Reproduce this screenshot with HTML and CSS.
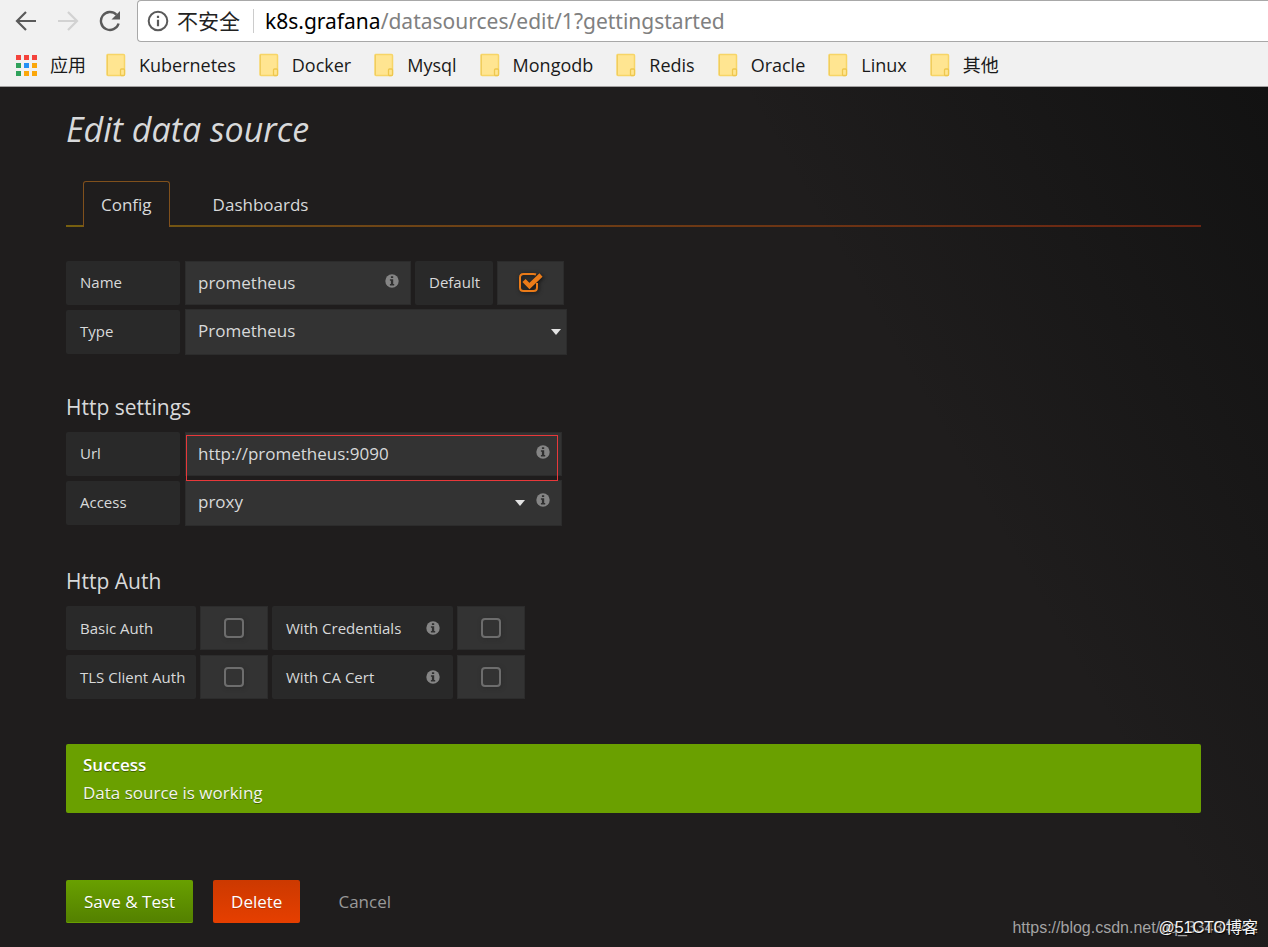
FILE: index.html
```html
<!DOCTYPE html>
<html lang="en">
<head>
<meta charset="utf-8">
<title>Edit data source</title>
<link rel="stylesheet" href="styles.css">
</head>
<body>
<svg class="sprite" aria-hidden="true">
  <symbol id="folder" viewBox="0 0 20 24">
    <path d="M1.500 1.500h16q1 0 1 1v19q0 1-1 1h-15.500q-1 0-1-1v-19q0-1 .5-1z" fill="#ffe591" stroke="#f7d567" stroke-width="1.500"/>
    <path d="M1.500 2v20" stroke="#f0cd5e" stroke-width="1"/>
    <rect x="14.500" y="16" width="4" height="6.500" rx="1" fill="#ffe591" stroke="#eec74e" stroke-width="1.300"/>
  </symbol>
  <symbol id="info" viewBox="0 0 14 14">
    <circle cx="7" cy="7" r="6.700" fill="#858585"/>
    <path d="M5.900 2.200h2.300v1.900H5.900zM4.900 5.200h3.300v4.700h1v1.500H4.900V9.900h1V6.700h-1z" fill="#303030"/>
  </symbol>
  <symbol id="caret" viewBox="0 0 10 6"><path d="M0 0h10L5 6z" fill="#e3e3e3"/></symbol>
</svg>

<header class="browser">
  <div class="toolbar">
    <button class="nav-button" aria-label="Back"><svg width="22" height="22" viewBox="0 0 22 22"><path d="M21 11H2.500M11 2L2 11l9 9" fill="none" stroke="#5a5a5a" stroke-width="2.200"/></svg></button>
    <button class="nav-button" aria-label="Forward"><svg width="22" height="22" viewBox="0 0 22 22"><path d="M1 11h18.500M11 2l9 9-9 9" fill="none" stroke="#d2d2d2" stroke-width="2.200"/></svg></button>
    <button class="nav-button" aria-label="Reload"><svg width="22" height="22" viewBox="0 0 22 22"><path d="M17.500 4.800A9 9 0 1 0 19.600 13.500" fill="none" stroke="#5a5a5a" stroke-width="2.400"/><path d="M21 1v8.500h-8.500z" fill="#5a5a5a"/></svg></button>
    <div class="address">
      <svg class="site-info" width="22" height="22" viewBox="0 0 22 22"><circle cx="11" cy="11" r="9.300" fill="none" stroke="#5a5a5a" stroke-width="2"/><path d="M9.900 5.800h2.200v2.300H9.900zM9.900 9.700h2.200v6.500H9.900z" fill="#5a5a5a"/></svg>
      <span class="security">不安全</span>
      <span class="url"><span class="host">k8s.grafana</span>/datasources/edit/1?gettingstarted</span>
    </div>
  </div>
  <nav class="bookmarks">
    <a class="apps" href="#"><svg width="21" height="21" viewBox="0 0 21 21"><path d="M0 0h5v5H0zM8 0h5v5H8zM16 0h5v5h-5z" fill="#f4433c"/><path d="M0 8h5v5H0zM0 16h5v5H0z" fill="#2fa25b"/><path d="M8 8h5v5H8z" fill="#2290f5"/><path d="M16 8h5v5h-5zM8 16h5v5H8zM16 16h5v5h-5z" fill="#fba70a"/></svg>应用</a>
    <div class="folders">
      <a href="#"><svg width="20" height="24"><use href="#folder"/></svg>Kubernetes</a>
      <a href="#"><svg width="20" height="24"><use href="#folder"/></svg>Docker</a>
      <a href="#"><svg width="20" height="24"><use href="#folder"/></svg>Mysql</a>
      <a href="#"><svg width="20" height="24"><use href="#folder"/></svg>Mongodb</a>
      <a href="#"><svg width="20" height="24"><use href="#folder"/></svg>Redis</a>
      <a href="#"><svg width="20" height="24"><use href="#folder"/></svg>Oracle</a>
      <a href="#"><svg width="20" height="24"><use href="#folder"/></svg>Linux</a>
      <a href="#"><svg width="20" height="24"><use href="#folder"/></svg>其他</a>
    </div>
  </nav>
</header>

<main class="page">
  <h1>Edit data source</h1>
  <nav class="tabs">
    <a class="tab active" href="#">Config</a>
    <a class="tab" href="#">Dashboards</a>
  </nav>

  <form>
    <section class="group">
      <div class="row">
        <label class="label" for="name">Name</label>
        <div class="field name-field">
          <input id="name" type="text" value="prometheus">
          <svg class="info"><use href="#info"/></svg>
        </div>
        <label class="label default-label" for="default">Default</label>
        <div class="switch">
          <input id="default" type="checkbox" checked>
          <svg class="mark" width="26" height="24" viewBox="0 0 26 24"><path d="M20 13v4.500q0 3.500-3.500 3.500h-10Q3 21 3 17.500v-10Q3 4 6.500 4h10q1.500 0 2.500.5" fill="none" stroke="#eb7b18" stroke-width="2"/><path d="M7 10.500l5.500 5.500L24 5" fill="none" stroke="#eb7b18" stroke-width="4.500"/></svg>
        </div>
      </div>
      <div class="row">
        <label class="label" for="type">Type</label>
        <div class="field select-field type-field">
          <select id="type"><option>Prometheus</option></select>
          <svg class="caret"><use href="#caret"/></svg>
        </div>
      </div>
    </section>

    <section class="group http">
      <h2>Http settings</h2>
      <div class="row">
        <label class="label" for="url">Url</label>
        <div class="field http-field">
          <input id="url" type="text" value="http://prometheus:9090">
          <svg class="info"><use href="#info"/></svg>
          <span class="highlight"></span>
        </div>
      </div>
      <div class="row">
        <label class="label" for="access">Access</label>
        <div class="field select-field http-field with-help">
          <select id="access"><option>proxy</option></select>
          <svg class="caret"><use href="#caret"/></svg>
          <svg class="info"><use href="#info"/></svg>
        </div>
      </div>
    </section>

    <section class="group auth">
      <h2>Http Auth</h2>
      <div class="row">
        <label class="label" for="basic">Basic Auth</label>
        <div class="switch"><input id="basic" type="checkbox"></div>
        <label class="label wide" for="credentials">With Credentials <svg class="help"><use href="#info"/></svg></label>
        <div class="switch"><input id="credentials" type="checkbox"></div>
      </div>
      <div class="row">
        <label class="label" for="tls">TLS Client Auth</label>
        <div class="switch"><input id="tls" type="checkbox"></div>
        <label class="label wide" for="ca">With CA Cert <svg class="help"><use href="#info"/></svg></label>
        <div class="switch"><input id="ca" type="checkbox"></div>
      </div>
    </section>

    <div class="alert" role="status">
      <strong>Success</strong>
      <span>Data source is working</span>
    </div>

    <div class="actions">
      <button class="button save" type="button">Save &amp; Test</button>
      <button class="button delete" type="button">Delete</button>
      <a class="cancel" href="#">Cancel</a>
    </div>
  </form>
  <span class="watermark">https://blog.csdn.net/qq_33484442</span>
  <span class="watermark brand">@51CTO博客</span>
</main>
</body>
</html>
```
FILE: styles.css
```css
* { box-sizing: border-box; }

body {
  display: flex;
  flex-direction: column;
  min-height: 100vh;
  margin: 0;
  color: #d8d9da;
  background: #1f1d1d;
  font: 17px/24px "Open Sans", "Noto Sans CJK SC", sans-serif;
}

a { color: inherit; text-decoration: none; }
.sprite { display: none; }

.browser {
  color: #1a1a1a;
  background: #f1f1f1;
  border-bottom: 1px solid #a3a1a1;
}

.toolbar {
  display: flex;
  align-items: center;
  gap: 20px;
  height: 42px;
  padding-left: 15px;
}

.nav-button {
  display: flex;
  width: 22px;
  padding: 0;
  border: 0;
  background: none;
}

.address {
  display: flex;
  flex: 1;
  align-items: center;
  height: 42px;
  margin-left: -4px;
  padding-left: 9px;
  background: #fff;
  border: 1px solid #a8a8a8;
  border-right: 0;
  border-radius: 4px 0 0 4px;
  font-family: "Noto Sans", "Noto Sans CJK SC", sans-serif;
  font-size: 21px;
  white-space: nowrap;
}

.security {
  margin-left: 8px;
  padding-right: 13px;
  border-right: 1px solid #ccc;
  color: #222;
}

.url { margin-left: 11px; color: #808080; }
.host { color: #000; }

.bookmarks {
  display: flex;
  align-items: center;
  gap: 20px;
  height: 44px;
  padding: 2px 0 0 16px;
  font-size: 18px;
  white-space: nowrap;
}

.folders { display: flex; gap: 23px; }
.bookmarks a { display: flex; align-items: center; gap: 13px; }

.page {
  position: relative;
  flex: 1;
  padding: 20px 67px 24px 66px;
  background: linear-gradient(60deg, transparent 70%, #121212 100%);
}

h1 {
  margin: 0;
  font-size: 34px;
  font-style: italic;
  font-weight: 400;
  line-height: 44px;
}

.tabs {
  display: flex;
  gap: 25px;
  margin-top: 30px;
  padding-left: 17px;
  border-bottom: 2px solid;
  border-image: linear-gradient(to right, #77600f, #6f4916 20%, #6b2412) 1;
}

.tab {
  height: 44px;
  padding: 11px 17px;
  border: 1px solid transparent;
  border-bottom: 0;
}

.tab.active {
  height: 46px;
  margin-bottom: -2px;
  background: #1f1d1d;
  border-color: #80501c;
  border-radius: 3px 3px 0 0;
}

.group { display: grid; gap: 5px; margin-top: 34px; }
.group.http { margin-top: 38px; }
.group.auth { margin-top: 41px; }

h2 {
  margin: 0 0 5px;
  font-size: 21px;
  font-weight: 400;
  line-height: 30px;
}

.row { display: flex; gap: 4px; height: 44px; }

.label {
  display: flex;
  align-items: center;
  width: 114px;
  padding: 0 14px 2px;
  background: #292929;
  border-radius: 2px;
  font-size: 15px;
  white-space: nowrap;
}

.default-label { width: 78px; }
.auth .label { width: 130px; padding-bottom: 0; }
.auth .wide { justify-content: space-between; width: 181px; padding-right: 13px; }

.field { position: relative; margin-left: 1px; }
.name-field { width: 226px; }
.type-field { width: 382px; }
.http-field { width: 377px; }
.select-field { margin-top: -1px; margin-bottom: -1px; }

.field input,
.field select {
  appearance: none;
  display: block;
  width: 100%;
  height: 100%;
  padding: 0 36px 2px 12px;
  border: 1px solid #2c2c2c;
  border-radius: 0;
  outline: 0;
  background: #333;
  color: #d8d9da;
  font: inherit;
}

.info, .help { width: 14px; height: 14px; }
.info { position: absolute; top: 13px; right: 12px; }
.caret { position: absolute; top: 20px; right: 6px; width: 10px; height: 6px; }
.with-help .caret { right: 37px; }

.highlight {
  position: absolute;
  z-index: 1;
  top: 3px;
  right: 4px;
  bottom: -5px;
  left: 1px;
  border: 1px solid #e8383a;
  pointer-events: none;
}

.switch {
  position: relative;
  display: grid;
  place-items: center;
  width: 67px;
  background: #333;
  border: 1px solid #2c2c2c;
}

.auth .switch { width: 68px; }

.switch input {
  appearance: none;
  width: 20px;
  height: 20px;
  margin: 0;
  border: 2px solid #6d6d6d;
  border-radius: 4px;
  box-shadow: 1px 1px 4px #2c2c2c;
}

.switch input:checked { opacity: 0; }

.mark {
  position: absolute;
  top: 8px;
  left: 19px;
  filter: drop-shadow(1px 1px 2px #111);
  pointer-events: none;
}

.alert {
  display: grid;
  gap: 4px;
  margin-top: 45px;
  padding: 9px 17px 8px;
  background: #6aa000;
  border-radius: 2px;
  color: #f2f5ea;
  text-shadow: 0 1px 0 rgba(0, 0, 0, .4);
}

.alert strong { color: #fff; font-weight: 600; }

.actions { display: flex; align-items: center; gap: 20px; margin-top: 67px; }

.button {
  height: 43px;
  padding: 0 18px;
  border: 0;
  border-radius: 2px;
  color: #fff;
  font: inherit;
  text-shadow: 0 1px 0 rgba(0, 0, 0, .2);
}

.save { background: linear-gradient(#69a000, #538000); box-shadow: inset 0 -1px #69a000; }
.delete { background: linear-gradient(#cc3900, #e63f00); }
.cancel { margin-left: 18px; color: #999; }

.watermark {
  position: absolute;
  right: 10px;
  bottom: 7px;
  color: rgba(210, 210, 210, .75);
  font: 16px/24px "Liberation Sans", "Noto Sans CJK SC", sans-serif;
}

.brand { color: #f5f5f5; text-shadow: 1px 1px 1px #000; }
```
